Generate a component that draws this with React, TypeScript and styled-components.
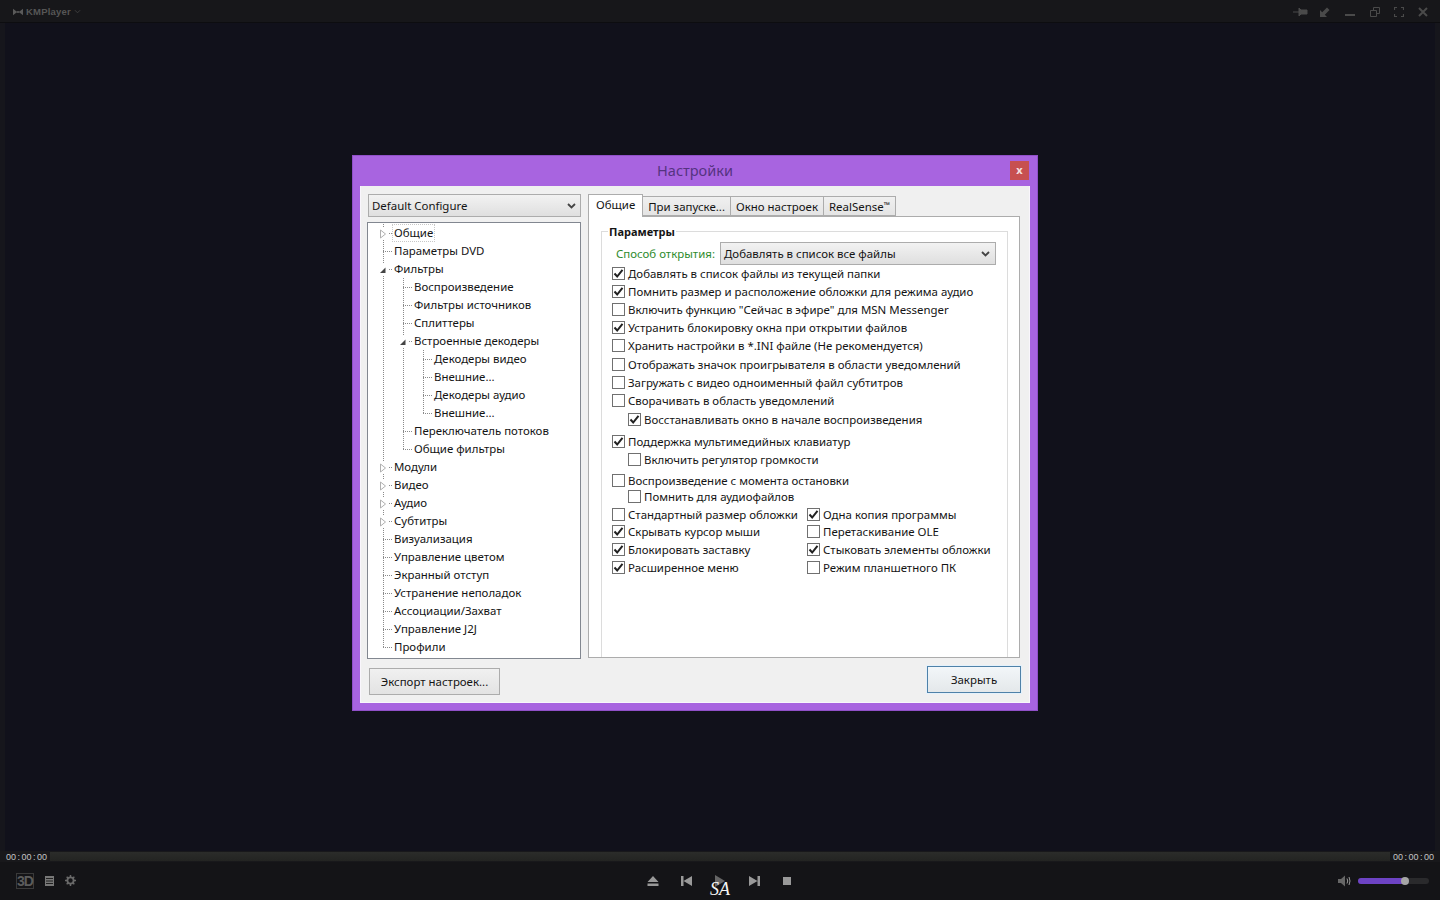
import React from 'react';
import styled, { createGlobalStyle } from 'styled-components';

const GlobalStyle = createGlobalStyle`
  html, body {
    margin: 0;
    padding: 0;
    background: #11111b;
  }
  * {
    box-sizing: border-box;
  }
`;

const uiFont = `"Noto Sans", "Open Sans", sans-serif`;
const uiSize = '11.45px';
const inkColor = '#141414';

type GuideKind = 'none' | 'line' | 'tee' | 'elbow';

type TreeItem = {
  label: string;
  guides: GuideKind[];
  expander?: 'open' | 'closed';
  focused?: boolean;
};

const treeItems: TreeItem[] = [
  { label: 'Общие', guides: ['tee'], expander: 'closed', focused: true },
  { label: 'Параметры DVD', guides: ['tee'] },
  { label: 'Фильтры', guides: ['tee'], expander: 'open' },
  { label: 'Воспроизведение', guides: ['line', 'tee'] },
  { label: 'Фильтры источников', guides: ['line', 'tee'] },
  { label: 'Сплиттеры', guides: ['line', 'tee'] },
  { label: 'Встроенные декодеры', guides: ['line', 'tee'], expander: 'open' },
  { label: 'Декодеры видео', guides: ['line', 'line', 'tee'] },
  { label: 'Внешние...', guides: ['line', 'line', 'tee'] },
  { label: 'Декодеры аудио', guides: ['line', 'line', 'tee'] },
  { label: 'Внешние...', guides: ['line', 'line', 'elbow'] },
  { label: 'Переключатель потоков', guides: ['line', 'tee'] },
  { label: 'Общие фильтры', guides: ['line', 'elbow'] },
  { label: 'Модули', guides: ['tee'], expander: 'closed' },
  { label: 'Видео', guides: ['tee'], expander: 'closed' },
  { label: 'Аудио', guides: ['tee'], expander: 'closed' },
  { label: 'Субтитры', guides: ['tee'], expander: 'closed' },
  { label: 'Визуализация', guides: ['tee'] },
  { label: 'Управление цветом', guides: ['tee'] },
  { label: 'Экранный отступ', guides: ['tee'] },
  { label: 'Устранение неполадок', guides: ['tee'] },
  { label: 'Ассоциации/Захват', guides: ['tee'] },
  { label: 'Управление J2J', guides: ['tee'] },
  { label: 'Профили', guides: ['elbow'] },
];

type Option = { label: string; checked: boolean; indent?: boolean; top?: number };

const options: Option[] = [
  { label: 'Добавлять в список файлы из текущей папки', checked: true },
  { label: 'Помнить размер и расположение обложки для режима аудио', checked: true },
  { label: 'Включить функцию "Сейчас в эфире" для MSN Messenger', checked: false },
  { label: 'Устранить блокировку окна при открытии файлов', checked: true },
  { label: 'Хранить настройки в *.INI файле (Не рекомендуется)', checked: false },
  { label: 'Отображать значок проигрывателя в области уведомлений', checked: false, top: 1 },
  { label: 'Загружать с видео одноименный файл субтитров', checked: false },
  { label: 'Сворачивать в область уведомлений', checked: false },
  { label: 'Восстанавливать окно в начале воспроизведения', checked: true, indent: true, top: 1 },
  { label: 'Поддержка мультимедийных клавиатур', checked: true, top: 4 },
  { label: 'Включить регулятор громкости', checked: false, indent: true },
  { label: 'Воспроизведение с момента остановки', checked: false, top: 3 },
  { label: 'Помнить для аудиофайлов', checked: false, indent: true, top: -2 },
];

const bottomOptions: Option[] = [
  { label: 'Стандартный размер обложки', checked: false },
  { label: 'Одна копия программы', checked: true },
  { label: 'Скрывать курсор мыши', checked: true },
  { label: 'Перетаскивание OLE', checked: false },
  { label: 'Блокировать заставку', checked: true },
  { label: 'Стыковать элементы обложки', checked: true },
  { label: 'Расширенное меню', checked: true },
  { label: 'Режим планшетного ПК', checked: false },
];

const Chevron = () => (
  <ChevronIcon viewBox="0 0 9 6">
    <path d="M1 1l3.5 3.5L8 1" fill="none" stroke="#444" strokeWidth="1.8" />
  </ChevronIcon>
);

const CheckOption = ({ label, checked, indent, top }: Option) => (
  <CheckRow $indent={indent} $top={top}>
    <CheckBox>
      {checked && (
        <svg viewBox="0 0 11 11" width="11" height="11">
          <path d="M1.5 5.5l2.7 3L9.5 1.8" fill="none" stroke="#222" strokeWidth="2" />
        </svg>
      )}
    </CheckBox>
    {label}
  </CheckRow>
);

const TreeExpander = ({ open }: { open: boolean }) => (
  <ExpanderBox>
    {open ? (
      <svg viewBox="0 0 8 8" width="8" height="8">
        <path d="M6.5 1.5V7H1z" fill="#444" />
      </svg>
    ) : (
      <svg viewBox="0 0 8 10" width="8" height="10">
        <path d="M1.5 1l5 4-5 4z" fill="#fff" stroke="#b0b0b0" />
      </svg>
    )}
  </ExpanderBox>
);

export default function App() {
  return (
    <>
      <GlobalStyle />
      <Player>
        <TopBar>
          <Brand>
            <svg viewBox="0 0 12 8" width="10" height="8">
              <path d="M0 0l5 4-5 4zM12 0L7 4l5 4z" fill="#5a5a5a" />
              <rect x="4.5" y="3" width="3" height="2" fill="#5a5a5a" />
            </svg>
            KMPlayer
            <svg viewBox="0 0 8 5" width="7" height="5">
              <path d="M1 1l3 3 3-3" fill="none" stroke="#444" strokeWidth="1" />
            </svg>
          </Brand>
          <WindowButtons>
            <PinIcon viewBox="0 0 15 12">
              <path d="M0 6h6M6 2v8l2-2h6V4H8L6 2z" fill="#4a4a4a" stroke="#4a4a4a" strokeWidth="1" />
            </PinIcon>
            <svg viewBox="0 0 10 10" width="10" height="10">
              <path d="M0 10V3l2.2 2.2L7 .5 9.5 3 4.8 7.8 7 10z" fill="#4a4a4a" />
            </svg>
            <svg viewBox="0 0 12 10" width="12" height="10">
              <path d="M1 7h10v2H1z" fill="#4a4a4a" />
            </svg>
            <svg viewBox="0 0 10 10" width="10" height="10">
              <path d="M.5 3.5h6v6h-6zM3.5 3V.5h6v6H7" fill="none" stroke="#4a4a4a" />
            </svg>
            <svg viewBox="0 0 10 10" width="10" height="10">
              <path d="M.5 3V.5H3M7 .5h2.5V3M9.5 7v2.500H7M3 9.500H.5V7" fill="none" stroke="#4a4a4a" strokeWidth="1.2" />
            </svg>
            <svg viewBox="0 0 10 10" width="10" height="10">
              <path d="M1 1l8 8M9 1L1 9" fill="none" stroke="#4a4a4a" strokeWidth="2" />
            </svg>
          </WindowButtons>
        </TopBar>

        <Stage>
          <Dialog>
            <TitleBar>
              <Title>Настройки</Title>
              <CloseBox>x</CloseBox>
            </TitleBar>
            <DialogBody>
              <Columns>
                <SideColumn>
                  <ConfigCombo>
                    Default Configure
                    <Chevron />
                  </ConfigCombo>
                  <Tree>
                    {treeItems.map((item, i) => (
                      <TreeRow key={i}>
                        {item.guides.map((kind, j) => (
                          <Guide key={j} $kind={kind}>
                            {j === item.guides.length - 1 && item.expander && (
                              <TreeExpander open={item.expander === 'open'} />
                            )}
                          </Guide>
                        ))}
                        <TreeLabel $focused={item.focused}>{item.label}</TreeLabel>
                      </TreeRow>
                    ))}
                  </Tree>
                </SideColumn>

                <MainColumn>
                  <Tabs>
                    <Tab $active>Общие</Tab>
                    <Tab>При запуске...</Tab>
                    <Tab>Окно настроек</Tab>
                    <Tab>
                      RealSense<Trademark>™</Trademark>
                    </Tab>
                  </Tabs>
                  <TabPanel>
                    <Group>
                      <Legend>Параметры</Legend>
                      <OpenRow>
                        <OpenLabel>Способ открытия:</OpenLabel>
                        <OpenCombo>
                          Добавлять в список все файлы
                          <Chevron />
                        </OpenCombo>
                      </OpenRow>
                      {options.map((o) => (
                        <CheckOption key={o.label} {...o} />
                      ))}
                      <OptionGrid>
                        {bottomOptions.map((o) => (
                          <CheckOption key={o.label} {...o} />
                        ))}
                      </OptionGrid>
                    </Group>
                  </TabPanel>
                </MainColumn>
              </Columns>
              <Footer>
                <ExportButton>Экспорт настроек...</ExportButton>
                <CloseButton>Закрыть</CloseButton>
              </Footer>
            </DialogBody>
          </Dialog>
        </Stage>

        <SeekRow>
          <Time>00 : 00 : 00</Time>
          <SeekTrack />
          <Time>00 : 00 : 00</Time>
        </SeekRow>

        <ControlBar>
          <ControlsLeft>
            <ThreeD>3D</ThreeD>
            <svg viewBox="0 0 9 10" width="9" height="10">
              <path d="M0 0h9v10H0z" fill="#777" />
              <path d="M1 2.5h7M1 5h7M1 7.5h7" stroke="#222" strokeWidth="1" />
            </svg>
            <svg viewBox="0 0 12 12" width="11" height="11">
              <circle cx="6" cy="6" r="3.4" fill="none" stroke="#6a6a6a" strokeWidth="2" />
              <path d="M6 0v2.5M6 9.5V12M0 6h2.5M9.5 6H12M1.8 1.8l1.8 1.8M8.4 8.4l1.8 1.8M10.2 1.8L8.4 3.6M3.6 8.4l-1.8 1.8" stroke="#6a6a6a" strokeWidth="1.6" />
            </svg>
          </ControlsLeft>

          <Transport>
            <TransportIcon viewBox="0 0 12 10">
              <path d="M6 0l5.5 6H.5zM.5 7.5h11V10H.5z" fill="#999" />
            </TransportIcon>
            <TransportIcon viewBox="0 0 12 10">
              <path d="M0 0h2.5v10H0zM2.5 5L11 0v10z" fill="#999" />
            </TransportIcon>
            <TransportIcon viewBox="0 0 12 12" $tall>
              <path d="M1 0l10 6-10 6z" fill="#666" />
            </TransportIcon>
            <TransportIcon viewBox="0 0 12 10">
              <path d="M12 0H9.5v10H12zM9.5 5L1 0v10z" fill="#999" />
            </TransportIcon>
            <TransportIcon viewBox="0 0 12 10">
              <path d="M2 1h8v8H2z" fill="#999" />
            </TransportIcon>
            <Watermark>SA</Watermark>
          </Transport>

          <VolumeArea>
            <svg viewBox="0 0 13 12" width="13" height="12">
              <path d="M0 4h3l4-3.5v11L3 8H0z" fill="#666" />
              <path d="M9 3.5q1.5 2.5 0 5M11 2q2 4 0 8" fill="none" stroke="#999" strokeWidth="1" />
            </svg>
            <VolumeTrack>
              <VolumeFill />
              <VolumeThumb />
            </VolumeTrack>
          </VolumeArea>
        </ControlBar>
      </Player>
    </>
  );
}

const Player = styled.div`
  width: 1440px;
  height: 900px;
  display: flex;
  flex-direction: column;
  overflow: hidden;
  background: #11111b;
  font-family: ${uiFont};
`;

const TopBar = styled.header`
  height: 23px;
  flex: none;
  display: flex;
  align-items: center;
  justify-content: space-between;
  padding: 1px 12px 0 13px;
  background: #17171a;
  border-bottom: 1px solid #0d0d10;
`;

const Brand = styled.div`
  display: flex;
  align-items: center;
  gap: 3px;
  color: #565656;
  font-family: "Liberation Sans", sans-serif;
  font-size: 9.5px;
  font-weight: 700;
  letter-spacing: 0.2px;
`;

const WindowButtons = styled.div`
  display: flex;
  align-items: center;
  gap: 14px;
`;

const PinIcon = styled.svg`
  width: 15px;
  height: 12px;
  margin-right: -2px;
`;

const Stage = styled.main`
  flex: 1;
  min-height: 0;
  padding: 132px 0 0 352px;
  border: solid #16161c;
  border-width: 0 5px;
  background: #11111b;
`;

const Dialog = styled.section`
  width: 686px;
  height: 556px;
  margin-left: -5px;
  display: flex;
  flex-direction: column;
  background: #a864e0;
  border: 1px solid #9050c8;
  padding: 0 7px 7px;
`;

const TitleBar = styled.div`
  height: 30px;
  flex: none;
  display: flex;
  align-items: center;
  justify-content: center;
  position: relative;
`;

const Title = styled.h1`
  margin: 0 0 2px;
  color: #553380;
  font-size: 14.5px;
  font-weight: 400;
`;

const CloseBox = styled.div`
  position: absolute;
  right: 1px;
  top: 5px;
  width: 19px;
  height: 19px;
  display: flex;
  align-items: center;
  justify-content: center;
  padding-bottom: 2px;
  background: #c75050;
  color: #f4e0e0;
  font-size: 11px;
  font-weight: 700;
`;

const DialogBody = styled.div`
  flex: 1;
  min-height: 0;
  display: flex;
  flex-direction: column;
  padding: 8px 9px 8px 6px;
  background: #f0f0f0;
  border: 1px solid #f9f6fc;
  border-width: 0 1px 1px;
`;

const Columns = styled.div`
  display: flex;
  gap: 7px;
  height: 465px;
  flex: none;
`;

const SideColumn = styled.div`
  width: 214px;
  flex: none;
  display: flex;
  flex-direction: column;
  gap: 5px;
`;

const ComboBase = styled.div`
  display: flex;
  align-items: center;
  justify-content: space-between;
  background: linear-gradient(#f2f2f2, #dfdfdf);
  border: 1px solid #acacac;
  color: ${inkColor};
  font-size: ${uiSize};
  white-space: nowrap;
`;

const ConfigCombo = styled(ComboBase)`
  height: 23px;
  margin-left: 1px;
  padding: 0 4px 0 3px;
`;

const ChevronIcon = styled.svg`
  width: 9px;
  height: 6px;
  flex: none;
`;

const Tree = styled.div`
  flex: 1;
  padding: 1px 0 0 5px;
  background: #fff;
  border: 1px solid #828790;
`;

const TreeRow = styled.div`
  height: 18px;
  display: flex;
  align-items: stretch;
`;

const dotV = `repeating-linear-gradient(to bottom, #8a8a8a 0 1px, transparent 1px 2px)`;
const dotH = `repeating-linear-gradient(to right, #8a8a8a 0 1px, transparent 1px 2px)`;

const guideBackground = (kind: GuideKind) => {
  switch (kind) {
    case 'line':
      return `background: ${dotV} 10px 0 / 1px 100% no-repeat;`;
    case 'tee':
      return `background: ${dotV} 10px 0 / 1px 100% no-repeat, ${dotH} 10px 9px / 9px 1px no-repeat;`;
    case 'elbow':
      return `background: ${dotV} 10px 0 / 1px 10px no-repeat, ${dotH} 10px 9px / 9px 1px no-repeat;`;
    default:
      return '';
  }
};

const Guide = styled.span<{ $kind: GuideKind }>`
  width: 20px;
  flex: none;
  display: flex;
  align-items: center;
  justify-content: center;
  ${(p) => guideBackground(p.$kind)}
`;

const ExpanderBox = styled.span`
  width: 9px;
  height: 12px;
  margin-top: 1px;
  display: flex;
  align-items: center;
  justify-content: center;
  background: #fff;
`;

const TreeLabel = styled.span<{ $focused?: boolean }>`
  padding: 0 1px;
  height: 16px;
  align-self: center;
  line-height: 16px;
  color: ${inkColor};
  font-size: ${uiSize};
  white-space: nowrap;
  outline: ${(p) => (p.$focused ? '1px dotted #c8c8c8' : 'none')};
`;

const MainColumn = styled.div`
  width: 432px;
  flex: none;
  display: flex;
  flex-direction: column;
`;

const Tabs = styled.div`
  height: 22px;
  flex: none;
  display: flex;
  align-items: flex-end;
  position: relative;
  z-index: 1;
`;

const Tab = styled.div<{ $active?: boolean }>`
  height: ${(p) => (p.$active ? '23px' : '20px')};
  margin-bottom: ${(p) => (p.$active ? '-1px' : '0')};
  padding: ${(p) => (p.$active ? '0 7px 3px' : '0 5px')};
  display: flex;
  align-items: center;
  background: ${(p) => (p.$active ? '#fff' : 'linear-gradient(#f0f0f0, #e4e4e4)')};
  border: 1px solid #acacac;
  border-bottom: ${(p) => (p.$active ? 'none' : '1px solid #acacac')};
  margin-left: ${(p) => (p.$active ? '0' : '-1px')};
  color: ${inkColor};
  font-size: ${uiSize};
  white-space: nowrap;
`;

const Trademark = styled.span`
  font-size: 8px;
  margin-bottom: 3px;
`;

const TabPanel = styled.div`
  height: 442px;
  padding: 6px 11px 0 12px;
  overflow: hidden;
  background: #fff;
  border: 1px solid #acacac;
`;

const Group = styled.fieldset`
  margin: 0;
  height: 460px;
  padding: 0 0 0 10px;
  border: 1px solid #dcdcdc;
  min-width: 0;
`;

const Legend = styled.legend`
  padding: 0 1px;
  margin-left: -4px;
  color: ${inkColor};
  font-size: 11px;
  font-weight: 700;
  line-height: 17px;
`;

const OpenRow = styled.div`
  display: flex;
  align-items: center;
  height: 23px;
  margin: 2px 11px -1px 4px;
`;

const OpenLabel = styled.span`
  width: 104px;
  flex: none;
  color: #2e8b2e;
  font-size: ${uiSize};
  white-space: nowrap;
`;

const OpenCombo = styled(ComboBase)`
  flex: 1;
  height: 23px;
  padding: 0 5px 0 3px;
`;

const CheckRow = styled.label<{ $indent?: boolean; $top?: number }>`
  height: 18px;
  display: flex;
  align-items: center;
  gap: 3px;
  margin-left: ${(p) => (p.$indent ? '16px' : '0')};
  margin-top: ${(p) => p.$top ?? 0}px;
  color: ${inkColor};
  font-size: ${uiSize};
  white-space: nowrap;
`;

const CheckBox = styled.span`
  width: 13px;
  height: 13px;
  flex: none;
  display: flex;
  align-items: center;
  justify-content: center;
  background: #fff;
  border: 1px solid #707070;
`;

const OptionGrid = styled.div`
  display: grid;
  grid-template-columns: 195px 1fr;
  grid-auto-rows: 17.7px;
`;

const Footer = styled.div`
  flex: 1;
  display: flex;
  align-items: flex-start;
  justify-content: space-between;
  padding: 7px 0 0 2px;
`;

const ButtonBase = styled.button`
  display: flex;
  align-items: center;
  justify-content: center;
  padding: 0;
  background: linear-gradient(#f0f0f0, #e3e3e3);
  color: ${inkColor};
  font-family: inherit;
  font-size: ${uiSize};
`;

const ExportButton = styled(ButtonBase)`
  width: 131px;
  height: 27px;
  margin-top: 2px;
  border: 1px solid #acacac;
`;

const CloseButton = styled(ButtonBase)`
  width: 94px;
  height: 27px;
  margin-right: -1px;
  border: 1px solid #4f81a8;
  box-shadow: 0 0 0 1px #e4f1fb;
  background: linear-gradient(#f2f6f9, #e4e8ea);
`;

const SeekRow = styled.div`
  height: 11px;
  flex: none;
  display: flex;
  align-items: center;
  gap: 3px;
  padding: 0 6px;
  background: #18181b;
`;

const Time = styled.span`
  width: 41px;
  flex: none;
  margin-top: 1px;
  color: #c4c4c4;
  font-family: "Liberation Sans", sans-serif;
  font-size: 9px;
  line-height: 11px;
  word-spacing: -1px;
  white-space: nowrap;
`;

const SeekTrack = styled.div`
  flex: 1;
  height: 9px;
  background: linear-gradient(#2b2c2a, #232422);
`;

const ControlBar = styled.footer`
  height: 38px;
  flex: none;
  display: grid;
  grid-template-columns: 1fr auto 1fr;
  align-items: center;
  padding: 0 16px 1px;
  background: #141417;
`;

const ControlsLeft = styled.div`
  display: flex;
  align-items: center;
  gap: 11px;
`;

const ThreeD = styled.span`
  width: 18px;
  height: 16px;
  display: flex;
  align-items: center;
  justify-content: center;
  color: #5c5c5c;
  border: 1px solid #3a3a3a;
  font-family: "Liberation Sans", sans-serif;
  font-size: 14px;
  font-weight: 700;
  letter-spacing: -1px;
`;

const Transport = styled.div`
  display: flex;
  align-items: center;
  gap: 21.5px;
  position: relative;
`;

const TransportIcon = styled.svg<{ $tall?: boolean }>`
  width: 12px;
  height: ${(p) => (p.$tall ? '12px' : '10px')};
  flex: none;
`;

const Watermark = styled.span`
  position: absolute;
  left: 63px;
  top: 4px;
  color: #f4f4f4;
  font-family: "Liberation Serif", serif;
  font-size: 18px;
  font-style: italic;
  line-height: 20px;
`;

const VolumeArea = styled.div`
  justify-self: end;
  display: flex;
  align-items: center;
  gap: 7px;
  margin-right: -5px;
`;

const VolumeTrack = styled.div`
  width: 71px;
  height: 6px;
  position: relative;
  background: #2a2a2c;
  border-radius: 3px;
`;

const VolumeFill = styled.div`
  width: 44px;
  height: 100%;
  background: #6d43c4;
  border-radius: 3px 0 0 3px;
`;

const VolumeThumb = styled.div`
  position: absolute;
  left: 43px;
  top: -1px;
  width: 8px;
  height: 8px;
  background: #a6a6a6;
  border-radius: 50%;
`;
